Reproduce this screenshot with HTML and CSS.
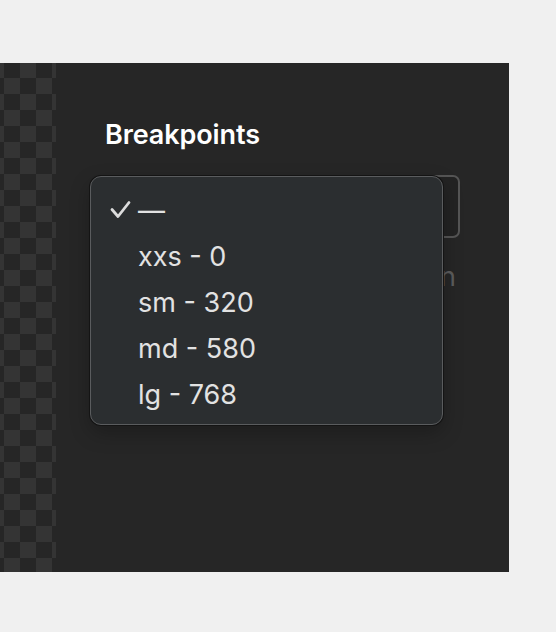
FILE: index.html
```html
<!DOCTYPE html>
<html lang="en">
<head>
<meta charset="utf-8">
<title>Breakpoints</title>
<link rel="stylesheet" href="styles.css">
</head>
<body>
<div class="frame">
  <div class="panel">
    <div class="checker"></div>
    <div class="content">
      <h2 class="title">Breakpoints</h2>
      <div class="field">
        <div class="select"></div>
        <p class="hint">Applies to the column</p>
        <ul class="menu">
          <li class="item selected">
            <svg class="check" width="22" height="20" viewBox="0 0 22 20"><polyline points="2,9.5 8,16.5 19,2.5" fill="none" stroke="#dcdcdc" stroke-width="2.8" stroke-linecap="round" stroke-linejoin="round"/></svg>
            <span class="label">—</span>
          </li>
          <li class="item"><span class="label">xxs - 0</span></li>
          <li class="item"><span class="label">sm - 320</span></li>
          <li class="item"><span class="label">md - 580</span></li>
          <li class="item"><span class="label">lg - 768</span></li>
        </ul>
      </div>
    </div>
  </div>
</div>
</body>
</html>
```
FILE: styles.css
```css
* { box-sizing: border-box; }
html, body { margin: 0; padding: 0; }
body {
  background: #f0f0f0;
  font-family: Inter, "Noto Sans", sans-serif;
  width: 556px;
  height: 632px;
  overflow: hidden;
}
.frame {
  padding-top: 63px;
}
.panel {
  width: 509px;
  height: 509px;
  background: #262626;
  display: flex;
}
.checker {
  width: 56px;
  flex: none;
  background-color: #262626;
  background-image:
    linear-gradient(45deg, #343434 25%, transparent 25%, transparent 75%, #343434 75%),
    linear-gradient(45deg, #343434 25%, transparent 25%, transparent 75%, #343434 75%);
  background-size: 32px 32px;
  background-position: 4px -1px, 20px 15px;
}
.content {
  flex: 1;
  padding: 55px 0 0 49px;
}
.title {
  margin: 0;
  font-size: 27px;
  line-height: 34px;
  font-weight: 600;
  color: #ffffff;
  letter-spacing: -0.1px;
}
.field {
  position: relative;
  margin-top: 23px;
  width: 355px;
}
.select {
  height: 63px;
  border: 2px solid #555555;
  border-radius: 7px;
  background: #232323;
}
.hint {
  margin: 22px 0 0;
  text-align: right;
  padding-right: 4px;
  font-size: 27px;
  line-height: 34px;
  color: #5c5c5c;
  white-space: nowrap;
}
.menu {
  position: absolute;
  left: -15px;
  top: 1px;
  width: 353px;
  height: 249px;
  margin: 0;
  padding: 11px 0 0;
  list-style: none;
  background: #2b2e30;
  border: 1px solid #5a5c5e;
  border-radius: 11px;
  box-shadow: 0 0 0 1px #141414, 0 8px 20px rgba(0,0,0,0.25);
}
.item {
  height: 46px;
  display: flex;
  align-items: center;
  padding-left: 47px;
  position: relative;
  font-size: 27px;
  color: #e2e2e2;
}
.check {
  position: absolute;
  left: 19px;
  top: 12px;
}
.label {
  line-height: 46px;
}
```
